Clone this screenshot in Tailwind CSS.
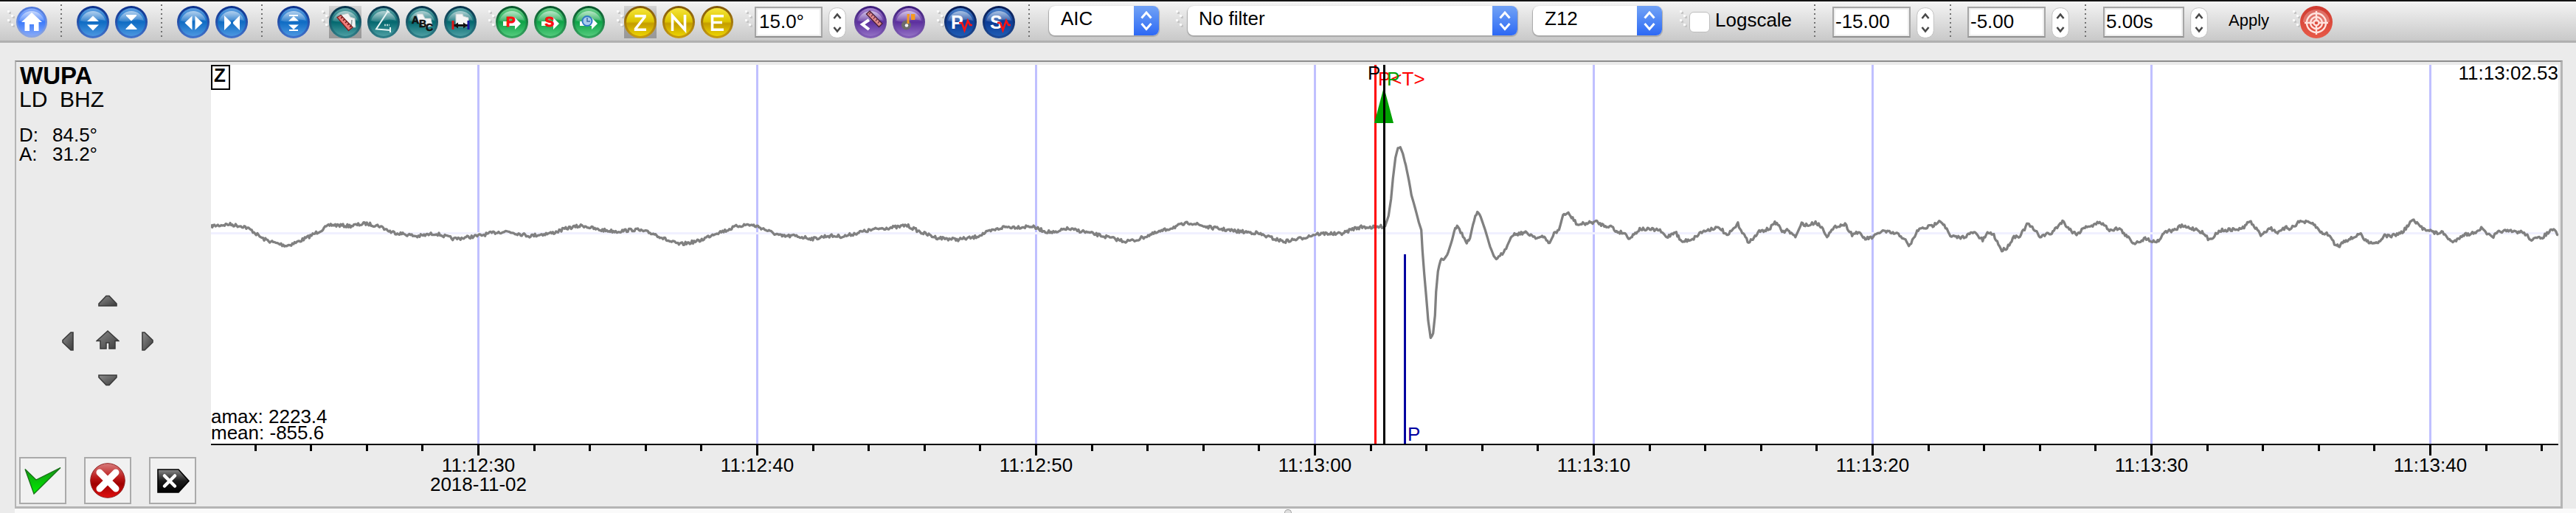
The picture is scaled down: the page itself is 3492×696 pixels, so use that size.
<!DOCTYPE html>
<html lang="en">
<head>
<meta charset="utf-8">
<title>Waveform picker</title>
<script src="https://cdn.jsdelivr.net/npm/@tailwindcss/browser@4"></script>
</head>
<body class="w-[3492px] h-[696px] overflow-hidden bg-[#ebebeb] text-black font-['Liberation_Sans',Arial,sans-serif] text-[26px] leading-none">

<!-- shared icon parts -->
<svg class="absolute w-0 h-0" aria-hidden="true">
  <defs>
    <linearGradient id="rimBlue" x2="0" y2="1"><stop offset="0" stop-color="#0a2f8a"/><stop offset="1" stop-color="#4274cc"/></linearGradient>
    <linearGradient id="bodyBlue" x2="0" y2="1"><stop offset="0" stop-color="#5f9fe0"/><stop offset=".5" stop-color="#0f6cc4"/><stop offset="1" stop-color="#4c97e0"/></linearGradient>
    <linearGradient id="rimHome" x2="0" y2="1"><stop offset="0" stop-color="#4a74d8"/><stop offset="1" stop-color="#8ba6e4"/></linearGradient>
    <linearGradient id="bodyHome" x2="0" y2="1"><stop offset="0" stop-color="#8db0fa"/><stop offset=".5" stop-color="#3d7bfb"/><stop offset="1" stop-color="#86a9f8"/></linearGradient>
    <linearGradient id="rimTeal" x2="0" y2="1"><stop offset="0" stop-color="#06324a"/><stop offset="1" stop-color="#2f8089"/></linearGradient>
    <linearGradient id="bodyTeal" x2="0" y2="1"><stop offset="0" stop-color="#5fa5a8"/><stop offset=".5" stop-color="#04686f"/><stop offset="1" stop-color="#4c9ea2"/></linearGradient>
    <linearGradient id="rimGreen" x2="0" y2="1"><stop offset="0" stop-color="#06532a"/><stop offset="1" stop-color="#35a860"/></linearGradient>
    <linearGradient id="bodyGreen" x2="0" y2="1"><stop offset="0" stop-color="#6fd08c"/><stop offset=".5" stop-color="#0fa348"/><stop offset="1" stop-color="#52cb7c"/></linearGradient>
    <linearGradient id="rimGold" x2="0" y2="1"><stop offset="0" stop-color="#80560a"/><stop offset="1" stop-color="#c89c10"/></linearGradient>
    <linearGradient id="bodyGold" x2="0" y2="1"><stop offset="0" stop-color="#f6e63a"/><stop offset=".48" stop-color="#dcc400"/><stop offset=".55" stop-color="#c49c00"/><stop offset="1" stop-color="#ecd400"/></linearGradient>
    <linearGradient id="rimPurple" x2="0" y2="1"><stop offset="0" stop-color="#3a1a78"/><stop offset="1" stop-color="#8460b8"/></linearGradient>
    <linearGradient id="bodyPurple" x2="0" y2="1"><stop offset="0" stop-color="#a888d0"/><stop offset=".5" stop-color="#5c2f9e"/><stop offset="1" stop-color="#9270c4"/></linearGradient>
    <linearGradient id="rimNavy" x2="0" y2="1"><stop offset="0" stop-color="#061a52"/><stop offset="1" stop-color="#1f4c98"/></linearGradient>
    <linearGradient id="bodyNavy" x2="0" y2="1"><stop offset="0" stop-color="#4c84cc"/><stop offset=".5" stop-color="#0c3c96"/><stop offset="1" stop-color="#1f5cb4"/></linearGradient>
    <linearGradient id="bodyRed" x2="0" y2="1"><stop offset="0" stop-color="#ce3a30"/><stop offset="1" stop-color="#e85a48"/></linearGradient>
    <linearGradient id="gloss" x2="0" y2="1"><stop offset="0" stop-color="#fff" stop-opacity=".55"/><stop offset="1" stop-color="#fff" stop-opacity=".12"/></linearGradient>
    <linearGradient id="press" x2="0" y2="1"><stop offset="0" stop-color="#d6d6d6"/><stop offset=".5" stop-color="#a2a2a2"/><stop offset="1" stop-color="#989898"/></linearGradient>
    <linearGradient id="dark" x2="1" y2="1"><stop offset="0" stop-color="#8c8c8c"/><stop offset="1" stop-color="#3c3c3c"/></linearGradient>
    <linearGradient id="stop" x2="0" y2="1"><stop offset="0" stop-color="#d87c7c"/><stop offset=".45" stop-color="#b81414"/><stop offset=".6" stop-color="#a00000"/><stop offset="1" stop-color="#e01010"/></linearGradient>
    <linearGradient id="tagFill" x2="0" y2="1"><stop offset="0" stop-color="#8a8a8a"/><stop offset=".5" stop-color="#1c1c1c"/><stop offset="1" stop-color="#000"/></linearGradient>
    <linearGradient id="tick" x2="0" y2="1"><stop offset="0" stop-color="#149414"/><stop offset="1" stop-color="#00ee00"/></linearGradient>
    <symbol id="shine" viewBox="0 0 44 44"><path d="M5 20A17.500 17 0 0 1 39 20Q30 17 22 20T5 20Z" fill="url(#gloss)"/></symbol>
    <symbol id="blue" viewBox="0 0 44 44"><circle cx="22" cy="22" r="22" fill="url(#rimBlue)"/><circle cx="22" cy="22" r="19" fill="url(#bodyBlue)"/><use href="#shine"/></symbol>
    <symbol id="teal" viewBox="0 0 44 44"><circle cx="22" cy="22" r="22" fill="url(#rimTeal)"/><circle cx="22" cy="22" r="19" fill="url(#bodyTeal)"/><use href="#shine"/></symbol>
    <symbol id="green" viewBox="0 0 44 44"><circle cx="22" cy="22" r="22" fill="url(#rimGreen)"/><circle cx="22" cy="22" r="19" fill="url(#bodyGreen)"/><use href="#shine"/></symbol>
    <symbol id="gold" viewBox="0 0 44 44"><circle cx="22" cy="22" r="22" fill="url(#rimGold)"/><circle cx="22" cy="22" r="19" fill="url(#bodyGold)"/></symbol>
    <symbol id="purple" viewBox="0 0 44 44"><circle cx="22" cy="22" r="22" fill="url(#rimPurple)"/><circle cx="22" cy="22" r="19" fill="url(#bodyPurple)"/><use href="#shine"/></symbol>
    <symbol id="navy" viewBox="0 0 44 44"><circle cx="22" cy="22" r="22" fill="url(#rimNavy)"/><circle cx="22" cy="22" r="19" fill="url(#bodyNavy)"/><use href="#shine"/></symbol>
    <symbol id="grip" viewBox="0 0 10 24">
      <g fill="#c6c6c6"><path d="M2 2h3v3H2zM7 8h3v3H7zM2 14h3v3H2zM7 20h3v3H7z"/></g>
      <g fill="#fafafa"><path d="M0 0h3v3H0zM5 6h3v3H5zM0 12h3v3H0zM5 18h3v3H5z"/></g>
    </symbol>
    <symbol id="sep" viewBox="0 0 2 46"><path d="M1 0V46" stroke="#707070" stroke-width="2" stroke-dasharray="2 4"/></symbol>
    <symbol id="step" viewBox="0 0 24 42"><rect x=".7" y=".7" width="22.600" height="40.600" rx="10" fill="#fff" stroke="#c2c2c2"/><path d="M7.500 15L12 9.500L16.500 15M7.500 27L12 32.500L16.500 27" fill="none" stroke="#484848" stroke-width="2.600"/></symbol>
    <symbol id="chev" viewBox="0 0 34 40"><path d="M10.500 16.500L17 9L23.500 16.500M10.500 24L17 31.500L23.500 24" fill="none" stroke="#fff" stroke-width="3"/></symbol>
  </defs>
</svg>

<div class="flex flex-col h-full">
<header class="h-[58px] shrink-0 border-t-2 border-t-[#141414] border-b-3 border-b-[#b0b0b0] bg-linear-to-b from-[#f4f4f4] to-[#c9c9c9] flex items-center">
  <svg class="w-[10px] h-6 ml-[10px] mb-[5px] shrink-0"><use href="#grip"/></svg>
  <svg class="w-[44px] h-[44px] ml-[1px] mt-[3px] shrink-0" viewBox="0 0 44 44"><circle cx="22" cy="22" r="21" fill="url(#rimHome)"/><circle cx="22" cy="22" r="18.500" fill="url(#bodyHome)"/><use href="#shine"/><path d="M22 9L8 22h4.500v12H19v-9h6v9h6.500V22H36z" fill="#fff"/></svg>
  <svg class="w-[2px] h-[46px] ml-[17px] shrink-0"><use href="#sep"/></svg>
  <svg class="w-[44px] h-[44px] ml-[20px] mt-[3px] shrink-0" viewBox="0 0 44 44"><use href="#blue"/><path d="M22 13.500L30 21H14zM14 25.500H30L22 33.500z" fill="#fff"/></svg>
  <svg class="w-[44px] h-[44px] ml-2 mt-[3px] shrink-0" viewBox="0 0 44 44"><use href="#blue"/><path d="M15 12H29V13.500L22 20.500L15 13.500zM22 23.500L29.500 31V32H14.500V31z" fill="#fff"/></svg>
  <svg class="w-[2px] h-[46px] ml-[18px] shrink-0"><use href="#sep"/></svg>
  <svg class="w-[44px] h-[44px] ml-[20px] mt-[3px] shrink-0" viewBox="0 0 44 44"><use href="#blue"/><path d="M20.500 13.500V32.500L10.500 23zM24.500 13.500V32.500L34.500 23z" fill="#fff"/></svg>
  <svg class="w-[44px] h-[44px] ml-2 mt-[3px] shrink-0" viewBox="0 0 44 44"><use href="#blue"/><path d="M12 13L21 22V24L12 33zM33 13L24 22V24L33 33z" fill="#fff"/></svg>
  <svg class="w-[2px] h-[46px] ml-[18px] shrink-0"><use href="#sep"/></svg>
  <svg class="w-[44px] h-[44px] ml-[20px] mt-[3px] shrink-0" viewBox="0 0 44 44"><use href="#blue"/><path d="M16 12h12v2H16zM22 14L29 20.500H15zM15 25.500H29L22 32zM16 32h12v2H16z" fill="#fff"/></svg>

  <svg class="w-[10px] h-6 ml-[16px] mb-[5px] shrink-0"><use href="#grip"/></svg>
  <svg class="w-[44px] h-[44px] mt-[3px] shrink-0" viewBox="0 0 44 44"><rect width="44" height="44" fill="url(#press)"/><use href="#teal"/><path d="M17 12l9-2 3 5 6 2 1 12-10 0z" fill="#f2f2f2" stroke="#b9c4c4"/><path d="M30 29l1-10" stroke="#8d9a9a" stroke-width="1.500"/><path d="M11 15.500L16 12.500L32 29L26.500 33.500z" fill="#ef7d7a" stroke="#7c1e1e" stroke-width="1.300"/><path d="M18 15l-2 2M21 18l-2 2M24 21l-2 2M27 24l-2 2M30 27l-2 2" stroke="#5a1010" stroke-width="1.200"/></svg>
  <svg class="w-[44px] h-[44px] ml-2 mt-[3px] shrink-0" viewBox="0 0 44 44"><use href="#teal"/><path d="M28 7L12 31.500L31 33M31 29v7M26 6l4 3" fill="none" stroke="#e9f4f4" stroke-width="2"/><path d="M23 26h7" stroke="#b5d6d6" stroke-width="2.500" stroke-dasharray="2 1"/></svg>
  <svg class="w-[44px] h-[44px] ml-2 mt-[3px] shrink-0" viewBox="0 0 44 44"><use href="#teal"/><path d="M15 11h8l3 6 8 0 2 10-9 2-10-7z" fill="#f4f4f4" stroke="#c4cfcf"/><g class="font-['Liberation_Sans',sans-serif] font-bold text-[14px]" fill="#111" stroke="#111" stroke-width=".6"><text x="8" y="24">A</text><text x="18" y="29">B</text><text x="27" y="34">C</text></g></svg>
  <svg class="w-[44px] h-[44px] ml-2 mt-[3px] shrink-0" viewBox="0 0 44 44"><use href="#teal"/><path d="M16 11h9l1 3 7 2v12H16z" fill="#f4f4f4" stroke="#c4cfcf"/><path d="M13 26.500H32" stroke="#111" stroke-width="3"/><path d="M13 26.500l6-4v8zM32 26.500l-6-4v8z" fill="#111"/><path d="M12 20v12" stroke="#e01515" stroke-width="3"/><path d="M33 20v12" stroke="#1515a0" stroke-width="3"/></svg>

  <svg class="w-[10px] h-6 ml-[16px] mb-[5px] shrink-0"><use href="#grip"/></svg>
  <svg class="w-[44px] h-[44px] mt-[3px] shrink-0" viewBox="0 0 44 44"><use href="#green"/><path d="M10 21h16v-5l8 8-8 8v-5H10z" fill="#fff"/><text x="14" y="28" class="font-['Liberation_Sans',sans-serif] font-bold text-[19px]" fill="#fb0f0f" stroke="#fb0f0f" stroke-width=".9">P</text></svg>
  <svg class="w-[44px] h-[44px] ml-2 mt-[3px] shrink-0" viewBox="0 0 44 44"><use href="#green"/><path d="M10 21h16v-5l8 8-8 8v-5H10z" fill="#fff"/><text x="14.500" y="28" class="font-['Liberation_Sans',sans-serif] font-bold text-[19px]" fill="#fb0f0f" stroke="#fb0f0f" stroke-width=".9">S</text></svg>
  <svg class="w-[44px] h-[44px] ml-2 mt-[3px] shrink-0" viewBox="0 0 44 44"><use href="#green"/><path d="M10 21h16v-5l8 8-8 8v-5H10z" fill="#fff"/><circle cx="20" cy="20.500" r="6.500" fill="#a9cbee" stroke="#2e78c4" stroke-width="2"/><path d="M20 16v5h4" fill="none" stroke="#3b6ea8" stroke-width="1.500"/></svg>

  <svg class="w-[10px] h-6 ml-[16px] mb-[5px] shrink-0"><use href="#grip"/></svg>
  <svg class="w-[44px] h-[44px] mt-[3px] shrink-0" viewBox="0 0 44 44"><rect width="44" height="44" fill="url(#press)"/><use href="#gold"/><path d="M14.500 13.800H28V15L15.500 31V32.300H30" fill="none" stroke="#fff" stroke-width="3.500"/></svg>
  <svg class="w-[44px] h-[44px] ml-2 mt-[3px] shrink-0" viewBox="0 0 44 44"><use href="#gold"/><path d="M13.500 34V13.500L30.500 32.500V12" fill="none" stroke="#fff" stroke-width="3.600"/></svg>
  <svg class="w-[44px] h-[44px] ml-2 mt-[3px] shrink-0" viewBox="0 0 44 44"><use href="#gold"/><path d="M31 13.800H15.500V32.300H31M15.500 22.500H29" fill="none" stroke="#fff" stroke-width="3.600"/></svg>

  <svg class="w-[10px] h-6 ml-[16px] mb-[5px] shrink-0"><use href="#grip"/></svg>
  <div class="ml-[3px] mt-[3px] w-[92px] h-[42px] border-2 border-[#a6a6a6] border-b-[#8f8f8f] bg-white shadow-[inset_0_0_0_2px_#ededed] pl-[4px] pt-[5px] shrink-0">15.0°</div>
  <svg class="w-6 h-[42px] ml-2 mt-[5px] shrink-0"><use href="#step"/></svg>
  <svg class="w-[44px] h-[44px] ml-[11px] mt-[3px] shrink-0" viewBox="0 0 44 44"><use href="#purple"/><path d="M20 19L11 25L20 32" fill="none" stroke="#fff" stroke-width="4"/><path d="M16.500 11L21 7L38 24L33.500 28.500z" fill="#e08a8a" stroke="#4a2038" stroke-width="1.400"/><path d="M22 9l-2 2.500M25 12l-2 2.500M28 15l-2 2.500M31 18l-2 2.500M34 21l-2 2.500" stroke="#5a2040" stroke-width="1.200"/></svg>
  <svg class="w-[44px] h-[44px] ml-2 mt-[3px] shrink-0" viewBox="0 0 44 44"><use href="#purple"/><circle cx="18.500" cy="26" r="6.500" fill="#6b6b6b"/><circle cx="19" cy="26.500" r="2.300" fill="#f4f4f4"/><path d="M21 24V11M26.500 19V11M20 12.500h3M25 12.500h4v5h-3" fill="none" stroke="#f79a1e" stroke-width="2.800"/></svg>

  <svg class="w-[10px] h-6 ml-[16px] mb-[5px] shrink-0"><use href="#grip"/></svg>
  <svg class="w-[44px] h-[44px] mt-[3px] shrink-0" viewBox="0 0 44 44"><use href="#navy"/><text x="9" y="30.500" class="font-['Liberation_Sans',sans-serif] font-bold text-[25px]" fill="#fff">P</text><path d="M20 23h4l3.500 10L32 20l3 6h3" fill="none" stroke="#fa1414" stroke-width="2.600"/></svg>
  <svg class="w-[44px] h-[44px] ml-2 mt-[3px] shrink-0" viewBox="0 0 44 44"><use href="#navy"/><text x="10" y="30.500" class="font-['Liberation_Sans',sans-serif] font-bold text-[25px]" fill="#fff">S</text><path d="M20 23h4l3.500 10L32 20l3 6h3" fill="none" stroke="#fa1414" stroke-width="2.600"/></svg>
  <svg class="w-[2px] h-[46px] ml-[18px] shrink-0"><use href="#sep"/></svg>

  <div class="ml-[26px] mb-px w-[149px] h-[40px] rounded-[8px] bg-white flex shadow-[0_1px_1px_1px_#a8a8a8] shrink-0 overflow-hidden">
    <span class="flex-1 pl-4 pt-[4px]">AIC</span>
    <svg class="w-[34px] h-[40px] bg-linear-to-b from-[#72a2f5] to-[#2d68f4]"><use href="#chev"/></svg>
  </div>
  <svg class="w-[10px] h-6 ml-[23px] mb-[5px] shrink-0"><use href="#grip"/></svg>
  <div class="ml-[6px] mb-px w-[447px] h-[40px] rounded-[8px] bg-white flex shadow-[0_1px_1px_1px_#a8a8a8] shrink-0 overflow-hidden">
    <span class="flex-1 pl-[15px] pt-[4px]">No filter</span>
    <svg class="w-[34px] h-[40px] bg-linear-to-b from-[#72a2f5] to-[#2d68f4]"><use href="#chev"/></svg>
  </div>
  <div class="ml-[21px] mb-px w-[175px] h-[40px] rounded-[8px] bg-white flex shadow-[0_1px_1px_1px_#a8a8a8] shrink-0 overflow-hidden">
    <span class="flex-1 pl-4 pt-[4px]">Z12</span>
    <svg class="w-[34px] h-[40px] bg-linear-to-b from-[#72a2f5] to-[#2d68f4]"><use href="#chev"/></svg>
  </div>
  <svg class="w-[10px] h-6 ml-[24px] mb-[5px] shrink-0"><use href="#grip"/></svg>
  <div class="ml-[3px] mt-[3px] w-[28px] h-[28px] rounded-[6px] bg-white border border-[#bdbdbd] shrink-0"></div>
  <div class="ml-[7px] mb-[3px] w-[112px] shrink-0">Logscale</div>
  <svg class="w-[2px] h-[46px] ml-[22px] shrink-0"><use href="#sep"/></svg>
  <div class="ml-[23px] mt-[3px] w-[106px] h-[42px] border-2 border-[#a6a6a6] border-b-[#8f8f8f] bg-white shadow-[inset_0_0_0_2px_#ededed] pl-[2px] pt-[5px] shrink-0">-15.00</div>
  <svg class="w-6 h-[42px] ml-2 mt-[5px] shrink-0"><use href="#step"/></svg>
  <svg class="w-[2px] h-[46px] ml-[21px] shrink-0"><use href="#sep"/></svg>
  <div class="ml-[22px] mt-[3px] w-[106px] h-[42px] border-2 border-[#a6a6a6] border-b-[#8f8f8f] bg-white shadow-[inset_0_0_0_2px_#ededed] pl-[2px] pt-[5px] shrink-0">-5.00</div>
  <svg class="w-6 h-[42px] ml-2 mt-[5px] shrink-0"><use href="#step"/></svg>
  <svg class="w-[2px] h-[46px] ml-[21px] shrink-0"><use href="#sep"/></svg>
  <div class="ml-[23px] mt-[3px] w-[110px] h-[42px] border-2 border-[#a6a6a6] border-b-[#8f8f8f] bg-white shadow-[inset_0_0_0_2px_#ededed] pl-[2px] pt-[5px] shrink-0">5.00s</div>
  <svg class="w-6 h-[42px] ml-2 mt-[5px] shrink-0"><use href="#step"/></svg>
  <div class="ml-[28px] mb-[2px] w-[58px] text-[22px] shrink-0">Apply</div>
  <svg class="w-[10px] h-6 ml-[29px] mb-[5px] shrink-0"><use href="#grip"/></svg>
  <svg class="w-[44px] h-[44px] mt-[3px] shrink-0" viewBox="0 0 44 44"><circle cx="22" cy="22" r="22" fill="url(#bodyRed)"/><path d="M4 22A18 17 0 0 1 40 22Z" fill="#fff" opacity=".25"/><g fill="none" stroke="#ffe3de" stroke-width="2.400"><circle cx="22" cy="23" r="13"/><circle cx="22" cy="23" r="8"/><circle cx="22" cy="23" r="3.500"/><path d="M22 7v12M22 27v12M6 23h12M26 23h12"/></g></svg>
</header>

<main class="flex flex-1 pt-6 pl-5 pr-[18px]">
  <div class="h-[608px] w-full flex border-t-2 border-t-[#8e8e8e] border-l-2 border-l-[#b5b5b5] border-r-3 border-r-[#b5b5b5] border-b-3 border-b-[#b5b5b5]">
    <aside class="w-[264px] shrink-0 flex flex-col pl-1">
      <h1 class="font-bold text-[33px] leading-[36px] mt-px pl-px">WUPA</h1>
      <p class="text-[30px] leading-[30px] whitespace-pre -mt-px">LD  BHZ</p>
      <dl class="grid grid-cols-[45px_1fr] leading-[26px] mt-[20px]">
        <dt>D:</dt><dd>84.5°</dd><dt>A:</dt><dd>31.2°</dd>
      </dl>
      <div class="grid grid-cols-[16px_32px_16px] gap-x-[30px] items-center justify-items-center mt-[178px] ml-[58px]">
        <svg class="col-start-2 w-[26px] h-4 mb-8" viewBox="0 0 26 16"><path d="M11 1.500h4L25 12v3H1v-3z" fill="url(#dark)" stroke="#3a3a3a" stroke-width="1.600"/></svg>
        <svg class="col-start-1 w-4 h-[26px] translate-y-[2px]" viewBox="0 0 16 26"><path d="M15 1h-3L1 11.500v3L12 25h3z" fill="url(#dark)" stroke="#3a3a3a" stroke-width="1.600"/></svg>
        <svg class="w-8 h-[26px]" viewBox="0 0 32 26"><path d="M16 1L1 14.500h5V25h8v-8h4v8h8V14.500h5z" fill="url(#dark)" stroke="#3a3a3a" stroke-width="1.500"/></svg>
        <svg class="w-4 h-[26px] translate-y-[2px]" viewBox="0 0 16 26"><path d="M1 1h3l11 10.500v3L4 25H1z" fill="url(#dark)" stroke="#3a3a3a" stroke-width="1.600"/></svg>
        <svg class="col-start-2 w-[26px] h-4 mt-[34px]" viewBox="0 0 26 16"><path d="M11 14.500h4L25 4V1H1v3z" fill="url(#dark)" stroke="#3a3a3a" stroke-width="1.600"/></svg>
      </div>
      <div class="flex gap-6 mt-auto mb-[3px]">
        <div class="w-16 h-16 border-2 border-[#aaaaaa] bg-[#f1f1f1]"><svg class="w-[60px] h-[60px]" viewBox="0 0 60 60"><path d="M6 14.500L21 29L54 12.500L18 48z" fill="url(#tick)" stroke="#187018" stroke-width="1.300"/></svg></div>
        <div class="w-16 h-16 border-2 border-[#aaaaaa] bg-[#f1f1f1]"><svg class="w-[60px] h-[60px]" viewBox="0 0 60 60"><circle cx="30" cy="30" r="23.300" fill="url(#stop)" stroke="#902020"/><path d="M19 19L41 41M41 19L19 41" stroke="#fff" stroke-width="9" stroke-linecap="round"/></svg></div>
        <div class="w-16 h-16 border-2 border-[#aaaaaa] bg-[#f1f1f1]"><svg class="w-[60px] h-[60px]" viewBox="0 0 60 60"><path d="M10 15h28l14 15.500L38 46H10z" fill="url(#tagFill)" stroke="#000" stroke-width="1.600"/><path d="M19 23.500L33 37.500M33 23.500L19 37.500" stroke="#fff" stroke-width="4.500" stroke-linecap="round"/></svg></div>
      </div>
    </aside>

    <!-- user units are window pixels -->
    <svg class="w-[3185px] h-[603px] shrink-0" viewBox="286 84 3185 603">
      <rect x="286" y="88" width="3182" height="514" fill="#fff"/>
      <g id="grid" fill="#c0c0ff"></g>
      <rect x="286" y="315" width="3182" height="3" fill="#f0f0ff"/>
      <path id="trace" fill="none" stroke="#808080" stroke-width="3.300" stroke-linejoin="round"/>
      <rect x="287" y="89" width="24" height="32" fill="#fff" stroke="#000" stroke-width="2"/>
      <text x="290" y="110.500" class="font-bold text-[26px]">Z</text>
      <text x="286" y="574">amax: 2223.4</text>
      <text x="286" y="596">mean: -855.6</text>
      <text x="3468" y="107.500" text-anchor="end">11:13:02.53</text>
      <rect x="1863" y="88" width="3" height="514" fill="#f00"/>
      <text x="1868" y="115.500" fill="#f00">P&lt;T&gt;</text>
      <text x="1880" y="115.500" fill="#00a000">P</text>
      <path d="M1876 118L1889 167H1863z" fill="#00a000"/>
      <text x="1854" y="107.500">P</text>
      <rect x="1875" y="88" width="3" height="514"/>
      <rect x="1903" y="345" width="3" height="257" fill="#0000a0"/>
      <text x="1908" y="597.500" fill="#0000a0">P</text>
      <rect x="286" y="602" width="3182" height="2"/>
      <g id="ticks"></g>
      <g id="labels" text-anchor="middle"><text x="648.500" y="666">2018-11-02</text></g>
    </svg>
  </div>
</main>
<footer class="h-[6px] shrink-0 ml-5 bg-[#fafafa] flex justify-center items-end pr-5"><span class="w-[10px] h-[5px] rounded-t-full border border-b-0 border-[#a0a0a0] bg-[#e0e0e0]"></span></footer>
</div>

<script>
const NS = 'http://www.w3.org/2000/svg';
function add(parent, tag, attrs, text) {
  const el = document.createElementNS(NS, tag);
  for (const k in attrs) el.setAttribute(k, attrs[k]);
  if (text) el.textContent = text;
  document.getElementById(parent).appendChild(el);
}

// time axis: one major tick every 10 s, a minor one every 2 s
['11:12:30','11:12:40','11:12:50','11:13:00','11:13:10','11:13:20','11:13:30','11:13:40'].forEach((t, i) => {
  const x = 647 + i * 378;
  add('grid', 'rect', {x, y: 88, width: 3, height: 514});
  add('labels', 'text', {x: x + 1.5, y: 640}, t);
});
for (let i = -4; i <= 37; i++) {
  const x = Math.round(647 + i * 75.6);
  if (x < 3466) add('ticks', 'rect', {x, y: 604, width: 3, height: i % 5 === 0 ? 14 : 8});
}

// waveform segments: [x origin, x scale, y origin, y scale, samples]
const segments = [
 [280,1.96,280,3,'12,80 60,73 100,82 120,98 150,132 180,148 213,160 240,146 270,125 300,100 330,75 380,80 423,70 460,80 490,104 530,114 560,122 608,110 630,120 657,133 722,120 770,105 800,102 858,120 920,108 960,88 1000,78 1040,95 1090,102 1140,94 1190,112 1230,142 1258,155 1310,140 1350,110 1380,98 1410,80 1440,74 1465,82 1500,105 1530,122'],
 [1060,1.96,280,3,'0,122 30,120 85,132 120,120 165,122 210,104 260,90 310,84 330,76 370,106 410,127 465,135 510,127 540,108 590,84 640,84 660,80 700,102 730,108 752,90 800,102 850,120 910,142 940,138 970,120 1020,95 1050,80 1085,66 1130,84 1200,100 1260,108 1310,133 1335,143 1380,130 1420,112 1430,112'],
 [1800,3,70,2.851,'0,703 40,706 70,700 100,686 140,678 190,680 233,675 247,635 257,570 265,490 275,410 285,373 295,370 305,395 317,440 330,500 340,555 355,605 370,660 380,690 385,770 392,860 400,945 408,1040 418,1107 428,1090 436,1020 440,930 448,850 458,805 475,798 490,775 505,730 518,680 530,678 545,705 565,742 578,722 590,670 600,640 608,625 622,640 640,690 660,755 675,790 690,803 710,780 730,750 750,708 800,700 830,710 850,720 880,718 902,740 920,705 940,690 957,630 978,627 1000,650 1015,670 1060,663 1090,658 1120,672 1155,677 1170,695'],
 [2060,2.119,260,3,'300,168 316,190 345,152 400,156 423,186 447,162 465,205 500,190 520,166 560,147 580,152 595,182 627,132 655,203 670,195 685,165 720,150 733,122 757,165 768,155 792,185 810,130 830,138 850,124 868,145 883,180 910,140 935,133 955,175 970,165 993,192 1015,186 1040,160 1085,173 1105,190 1118,225 1145,155 1190,137 1205,115 1220,135 1237,183 1270,187 1305,165 1330,198 1347,165 1362,177 1385,240 1400,228 1420,183 1437,180 1460,130 1495,182 1518,172'],
 [2780,2.202,260,3,'0,172 35,120 65,165 80,172 105,140 125,140 146,122 175,155 205,150 225,180 248,210 285,190 310,205 325,195 340,162 370,157 388,140 440,155 455,170 473,197 505,158 570,152 594,120 627,175 655,148 680,168 700,147 715,150 745,120 785,132 805,165 830,175 850,218 862,220 875,200 900,190 922,170 940,200 965,208 980,205 993,180 1020,180 1050,165 1080,115 1110,150 1130,155 1145,168 1170,167 1200,208 1230,175 1255,172 1285,150 1318,188 1340,160 1410,165 1435,195 1465,188 1498,153 1515,178']
];
const pts = segments.flatMap(([x0, sx, y0, sy, s]) =>
  s.split(' ').map(p => { const [a, b] = p.split(',').map(Number); return [x0 + a / sx, y0 + b / sy]; }));
let seed = 7;
const rnd = () => (seed = (seed * 16807) % 2147483647) / 2147483647 - 0.5;
let d = '';
for (let i = 0; i < pts.length - 1; i++) {
  const [x1, y1] = pts[i], [x2, y2] = pts[i + 1];
  const steep = Math.abs((y2 - y1) / (x2 - x1)) > 2;
  const n = Math.max(1, Math.round((x2 - x1) / 1.5));
  for (let k = 0; k < n; k++) {
    const t = k / n, noise = steep ? 0 : rnd() * 4.4;
    d += (d ? 'L' : 'M') + (x1 + (x2 - x1) * t).toFixed(1) + ' ' + (y1 + (y2 - y1) * t + noise).toFixed(1);
  }
}
document.getElementById('trace').setAttribute('d', d + 'L3468 319');
</script>
</body>
</html>
